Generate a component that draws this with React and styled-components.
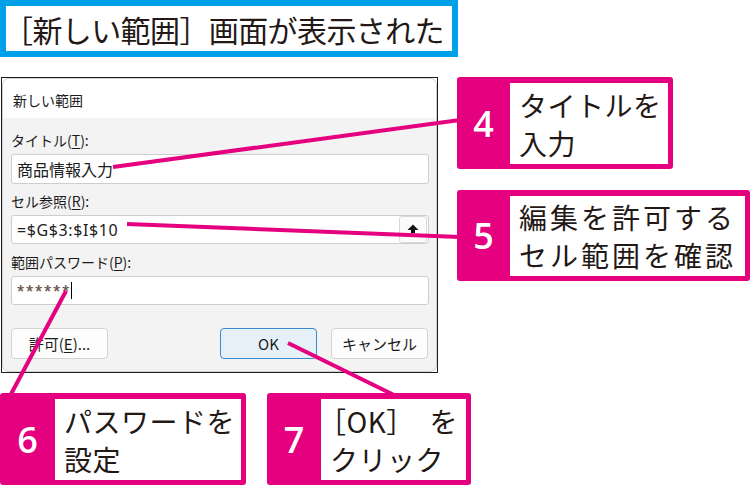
import React from 'react';
import styled, { createGlobalStyle } from 'styled-components';

const GlobalStyle = createGlobalStyle`
  html, body {
    margin: 0;
    padding: 0;
    background: #ffffff;
  }
  body {
    font-family: "Noto Sans CJK JP", "Noto Sans", sans-serif;
  }
`

const MAGENTA = '#e4007f';
const INK = '#231815';

const Page = styled.div`
  position: relative;
  width: 752px;
  height: 486px;
  overflow: hidden;
  background: #ffffff;
`
const Heading = styled.div`
  box-sizing: border-box;
  width: 458px;
  height: 57px;
  border: 6px solid #00a0e9;
  display: flex;
  align-items: center;
  font-family: "Noto Sans CJK JP", sans-serif;
  font-size: 30px;
  letter-spacing: -0.6px;
  color: ${INK};
  white-space: nowrap;
  text-indent: -3px;
  line-height: 1;
`
const Middle = styled.div`
  display: flex;
  margin-top: 20px;
`
const Frame = styled.div`
  box-sizing: border-box;
  margin-left: 1px;
  width: 437px;
  height: 296px;
  border: 1px solid #1e1e1e;
`
const Window = styled.div`
  box-sizing: border-box;
  height: 100%;
  border: 1px solid #cfcfcf;
  border-radius: 7px;
  overflow: hidden;
  background: #f3f3f3;
  display: flex;
  flex-direction: column;
  font-family: "Noto Sans CJK JP", sans-serif;
  color: #1b1b1b;
`
const TitleBar = styled.div`
  height: 39px;
  background: #ffffff;
  font-size: 14px;
  line-height: 20px;
  padding: 11px 0 0 10px;
  box-sizing: border-box;
`
const Body = styled.div`
  flex: 1;
  display: flex;
  flex-direction: column;
  padding: 12px 7px 0 8px;
`
const Label = styled.div`
  font-size: 14px;
  line-height: 20px;
  height: 20px;
  margin-top: ${p => p.$top || 0}px;
  margin-bottom: 4px;
  u { text-underline-offset: 2px; }
`
const Field = styled.div`
  box-sizing: border-box;
  height: ${p => p.$h || 30}px;
  background: #ffffff;
  border: 1px solid #cdcdcd;
  border-radius: 3px;
  display: flex;
  align-items: center;
  padding: 0 1px 0 5px;
  font-size: 16px;
`
const FieldText = styled.span`
  flex: 1;
  font-family: ${p => p.$latin ? '"Noto Sans", sans-serif' : '"Noto Sans CJK JP", sans-serif'};
  letter-spacing: ${p => p.$spacing || 0}px;
  color: #202020;
  display: flex;
  align-items: center;
`
const Caret = styled.span`
  display: inline-block;
  width: 1px;
  height: 17px;
  background: #000;
`
const Stars = styled.span`
  font-family: "Liberation Sans", sans-serif;
  font-size: 18px;
  letter-spacing: 2px;
  color: #555;
  text-shadow: 0.7px 0 0 rgba(220, 90, 60, 0.55);
  margin-top: 4px;
`
const PickButton = styled.div`
  box-sizing: border-box;
  width: 28px;
  height: 27px;
  border: 1px solid #d8d8d8;
  border-radius: 3px;
  background: #fbfbfb;
  display: flex;
  align-items: center;
  justify-content: center;
`
const ButtonRow = styled.div`
  display: flex;
  align-items: center;
  margin-top: 23px;
`
const Button = styled.div`
  box-sizing: border-box;
  width: 97px;
  height: 31px;
  border-radius: 4px;
  border: 1px solid ${p => p.$primary ? '#3c8ad0' : '#d3d3d3'};
  background: ${p => p.$primary ? '#e6f0f9' : '#fdfdfd'};
  display: flex;
  align-items: center;
  justify-content: center;
  font-size: 15px;
  margin-left: ${p => p.$left || 0}px;
  u { text-underline-offset: 2px; }
`
const RightColumn = styled.div`
  display: flex;
  flex-direction: column;
  gap: 21px;
  margin-left: 19px;
`
const Bottom = styled.div`
  display: flex;
  gap: 21px;
  margin-top: 20px;
`
const Callout = styled.div`
  position: relative;
  z-index: 1;
  box-sizing: border-box;
  width: ${p => p.$w}px;
  height: ${p => p.$h || 92}px;
  background: ${MAGENTA};
  border-radius: 3px;
  display: flex;
  padding: 6px 5px 5px 0;
`
const Num = styled.div`
  width: ${p => p.$w || 53}px;
  display: flex;
  align-items: center;
  justify-content: center;
  color: #ffffff;
  font-family: "Open Sans", sans-serif;
  font-weight: 600;
  font-size: 36px;
  margin-top: -1px;
`
const Note = styled.div`
  flex: 1;
  background: #ffffff;
  display: flex;
  flex-direction: column;
  justify-content: center;
  padding-left: 9px;
  font-family: "Noto Sans CJK JP", sans-serif;
  font-size: 28px;
  line-height: 38px;
  letter-spacing: ${p => p.$spacing || 0}px;
  color: ${INK};
  white-space: nowrap;
`
const OpenBracketLine = styled.span`
  margin-left: -12px;
`
const Leaders = styled.svg`
  position: absolute;
  left: 0;
  top: 0;
  pointer-events: none;
`

const UploadIcon = () => (
  <svg width="14" height="14" viewBox="0 0 14 14">
    <polygon points="7,1.5 12.5,7 9,7 9,10 5,10 5,7 1.5,7" fill="#111" />
    <rect x="1.5" y="11.6" width="11" height="1.4" fill="#111" />
  </svg>
)

const lines = [
  [113, 167, 460, 120],
  [127, 224, 460, 237],
  [66, 291, 10, 396],
  [288, 343, 396, 396],
]

const App = () => (
  <>
    <GlobalStyle />
    <Page>
      <Heading>［新しい範囲］画面が表示された</Heading>
      <Middle>
        <Frame>
          <Window>
            <TitleBar>新しい範囲</TitleBar>
            <Body>
              <Label>タイトル(<u>T</u>):</Label>
              <Field>
                <FieldText>商品情報入力</FieldText>
              </Field>
              <Label $top={7}>セル参照(<u>R</u>):</Label>
              <Field $h={29}>
                <FieldText $latin $spacing={0.6}>=$G$3:$I$10</FieldText>
                <PickButton><UploadIcon /></PickButton>
              </Field>
              <Label $top={8}>範囲パスワード(<u>P</u>):</Label>
              <Field $h={29}>
                <FieldText><Stars>******</Stars><Caret /></FieldText>
              </Field>
              <ButtonRow>
                <Button>許可(<u>E</u>)...</Button>
                <Button $primary $left={112}>OK</Button>
                <Button $left={14}>キャンセル</Button>
              </ButtonRow>
            </Body>
          </Window>
        </Frame>
        <RightColumn>
          <Callout $w={216}>
            <Num>4</Num>
            <Note $spacing={0.5}>
              <span>タイトルを</span>
              <span>入力</span>
            </Note>
          </Callout>
          <Callout $w={293} $h={91}>
            <Num>5</Num>
            <Note $spacing={3}>
              <span>編集を許可する</span>
              <span>セル範囲を確認</span>
            </Note>
          </Callout>
        </RightColumn>
      </Middle>
      <Bottom>
        <Callout $w={246}>
          <Num $w={55}>6</Num>
          <Note $spacing={0.5}>
            <span>パスワードを</span>
            <span>設定</span>
          </Note>
        </Callout>
        <Callout $w={204}>
          <Num $w={54}>7</Num>
          <Note $spacing={0.5}>
            <OpenBracketLine>［OK］{'\u2002'}を</OpenBracketLine>
            <span>クリック</span>
          </Note>
        </Callout>
      </Bottom>
      <Leaders width="752" height="486">
        {lines.map(([x1, y1, x2, y2], i) => (
          <line key={i} x1={x1} y1={y1} x2={x2} y2={y2} stroke={MAGENTA} strokeWidth="4" />
        ))}
      </Leaders>
    </Page>
  </>
)

export default App;
